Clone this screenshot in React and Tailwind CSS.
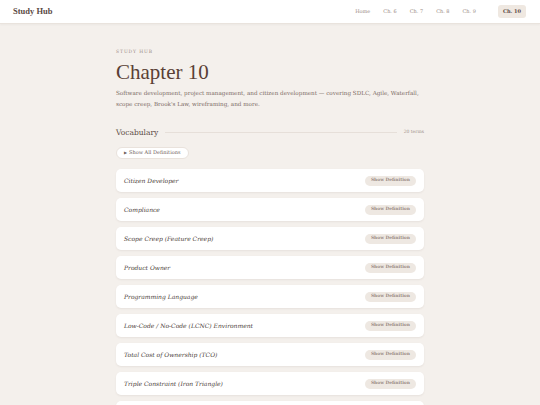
import React, { useState } from "react";

const NAV = ["Home", "Ch. 6", "Ch. 7", "Ch. 8", "Ch. 9", "Ch. 10"];

const TERMS = [
  "Citizen Developer",
  "Compliance",
  "Scope Creep (Feature Creep)",
  "Product Owner",
  "Programming Language",
  "Low-Code / No-Code (LCNC) Environment",
  "Total Cost of Ownership (TCO)",
  "Triple Constraint (Iron Triangle)",
  "Waterfall",
];

const serif = { fontFamily: '"DejaVu Serif", "Liberation Serif", serif' };
const times = { fontFamily: '"Liberation Serif", "DejaVu Serif", serif' };

export default function App() {
  const [open, setOpen] = useState({});

  return (
    <div className="h-screen overflow-hidden bg-[#f4f0ec] text-[#4a3a34]" style={serif}>
      {/* Top bar */}
      <header className="h-[24px] bg-white border-b border-[#e9e3dd] shadow-[0_1px_2px_rgba(0,0,0,0.04)] flex items-center justify-between pl-[13px] pr-[14px]">
        <span className="text-[8.5px] font-bold text-[#5b4a44]" style={times}>
          Study Hub
        </span>
        <nav className="flex items-center gap-[1px]">
          {NAV.map((n) => (
            <span
              key={n}
              className={
                n === "Ch. 10"
                  ? "ml-[15px] text-[5px] px-[5px] py-[3px] rounded-[3px] bg-[#efe8e1] text-[#5b4a44] font-bold"
                  : "text-[5px] px-[6px] py-[3px] text-[#9a8b84]"
              }
            >
              {n}
            </span>
          ))}
        </nav>
      </header>

      <main className="mx-auto w-[308px] pt-[25px]">
        <p className="text-[4.5px] tracking-[0.2em] text-[#9a8b84] uppercase">Study Hub</p>
        <h1 className="mt-[6px] text-[21px] leading-none text-[#5a3f35]" style={times}>
          Chapter 10
        </h1>
        <p className="mt-[5px] text-[5.65px] leading-[11px] text-[#7c6c65]">
          Software development, project management, and citizen development — covering SDLC, Agile, Waterfall,
          scope creep, Brook's Law, wireframing, and more.
        </p>

        <div className="mt-[17px] flex items-center gap-[7px]">
          <h2 className="text-[7.5px] text-[#5a4a44]">Vocabulary</h2>
          <div className="flex-1 h-px bg-[#e6dfd9]" />
          <span className="text-[4.5px] text-[#a0918a]">20 terms</span>
        </div>

        <button className="mt-[9px] h-[12px] px-[7px] rounded-full bg-white border border-[#e9e2dc] text-[5px] text-[#6f605a] flex items-center gap-[2px]">
          <span className="text-[4px]">▶</span> Show All Definitions
        </button>

        <ul className="mt-[10px] flex flex-col gap-[6px]">
          {TERMS.map((t) => (
            <li
              key={t}
              className="h-[23px] shrink-0 bg-white rounded-[5px] shadow-[0_1px_2px_rgba(80,60,50,0.08)] flex items-center justify-between pl-[8px] pr-[8px]"
            >
              <span className="italic text-[6px] text-[#4b3d38]">{t}</span>
              <button
                onClick={() => setOpen((o) => ({ ...o, [t]: !o[t] }))}
                className="h-[10px] px-[6px] rounded-full bg-[#eee8e2] text-[4.4px] font-bold text-[#9a8b84]"
              >
                Show Definition
              </button>
            </li>
          ))}
        </ul>
      </main>
    </div>
  );
}
